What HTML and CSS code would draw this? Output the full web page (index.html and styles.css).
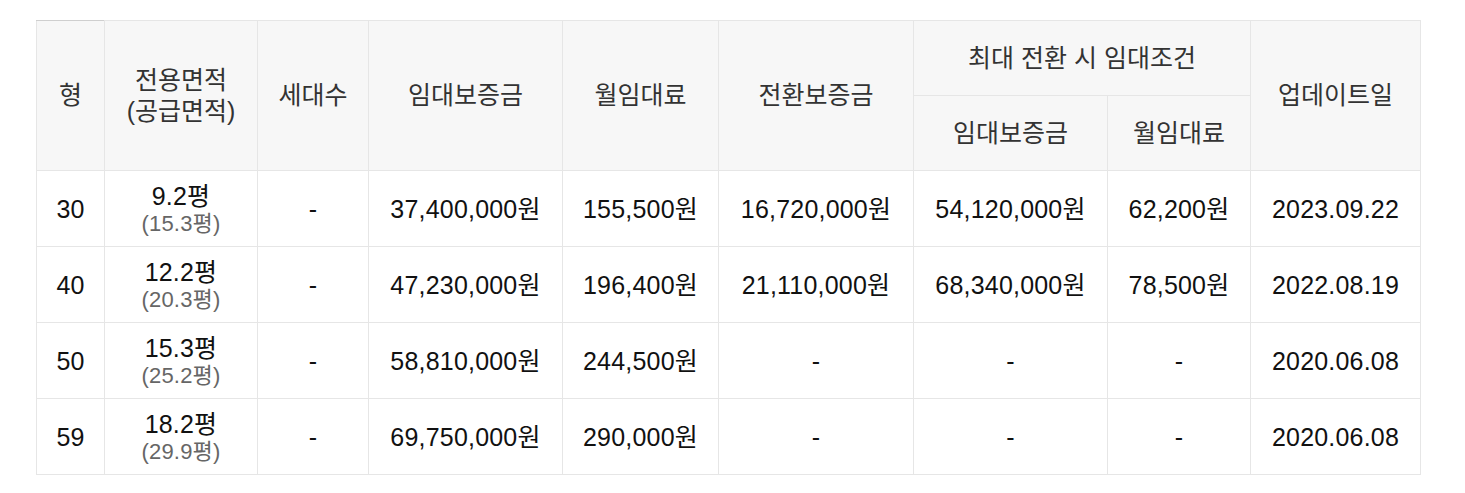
FILE: index.html
```html
<!DOCTYPE html>
<html lang="ko">
<head>
<meta charset="utf-8">
<link rel="stylesheet" href="styles.css">
</head>
<body>
<div class="wrap">
<table class="rent">
  <colgroup>
    <col class="c-type"><col class="c-area"><col class="c-units"><col class="c-dep"><col class="c-rent"><col class="c-conv"><col class="c-mdep"><col class="c-mrent"><col class="c-date">
  </colgroup>
  <thead>
    <tr class="h1">
      <th rowspan="2">형</th>
      <th rowspan="2">전용면적<br>(공급면적)</th>
      <th rowspan="2">세대수</th>
      <th rowspan="2">임대보증금</th>
      <th rowspan="2">월임대료</th>
      <th rowspan="2">전환보증금</th>
      <th colspan="2">최대 전환 시 임대조건</th>
      <th rowspan="2">업데이트일</th>
    </tr>
    <tr class="h2">
      <th>임대보증금</th>
      <th>월임대료</th>
    </tr>
  </thead>
  <tbody>
    <tr>
      <td>30</td>
      <td><span class="main">9.2평</span><span class="sub">(15.3평)</span></td>
      <td>-</td>
      <td>37,400,000원</td>
      <td>155,500원</td>
      <td>16,720,000원</td>
      <td>54,120,000원</td>
      <td>62,200원</td>
      <td>2023.09.22</td>
    </tr>
    <tr>
      <td>40</td>
      <td><span class="main">12.2평</span><span class="sub">(20.3평)</span></td>
      <td>-</td>
      <td>47,230,000원</td>
      <td>196,400원</td>
      <td>21,110,000원</td>
      <td>68,340,000원</td>
      <td>78,500원</td>
      <td>2022.08.19</td>
    </tr>
    <tr>
      <td>50</td>
      <td><span class="main">15.3평</span><span class="sub">(25.2평)</span></td>
      <td>-</td>
      <td>58,810,000원</td>
      <td>244,500원</td>
      <td>-</td>
      <td>-</td>
      <td>-</td>
      <td>2020.06.08</td>
    </tr>
    <tr>
      <td>59</td>
      <td><span class="main">18.2평</span><span class="sub">(29.9평)</span></td>
      <td>-</td>
      <td>69,750,000원</td>
      <td>290,000원</td>
      <td>-</td>
      <td>-</td>
      <td>-</td>
      <td>2020.06.08</td>
    </tr>
  </tbody>
</table>
</div>
</body>
</html>
```
FILE: styles.css
```css
html, body {
  margin: 0;
  padding: 0;
  background: #fff;
}
.wrap {
  padding: 20px 0 0 36px;
}
.rent {
  width: 1384px;
  table-layout: fixed;
  border-collapse: collapse;
  font-family: "Liberation Sans", "Noto Sans CJK KR", sans-serif;
  border-top: 1px solid #cfcfcf;
}
.c-type { width: 68px; }
.c-area { width: 153px; }
.c-units { width: 111px; }
.c-dep { width: 194px; }
.c-rent { width: 156px; }
.c-conv { width: 195px; }
.c-mdep { width: 194px; }
.c-mrent { width: 143px; }
.c-date { width: 170px; }

.rent th, .rent td {
  border: 1px solid #e6e6e6;
  text-align: center;
  vertical-align: middle;
  padding: 0;
}
.rent th {
  background: #f7f7f7;
  color: #333;
  font-weight: normal;
  font-size: 25px;
  line-height: 31px;
  height: 74px;
}
.rent thead tr.h1 th:first-child { border-top: 1px solid #cfcfcf; }
.rent td {
  height: 75px;
  color: #111;
  font-size: 25px;
  line-height: 30px;
  letter-spacing: 0.2px;
}
.main {
  display: block;
  line-height: 30px;
}
.sub {
  display: block;
  font-size: 22px;
  line-height: 26px;
  color: #666;
}
```
